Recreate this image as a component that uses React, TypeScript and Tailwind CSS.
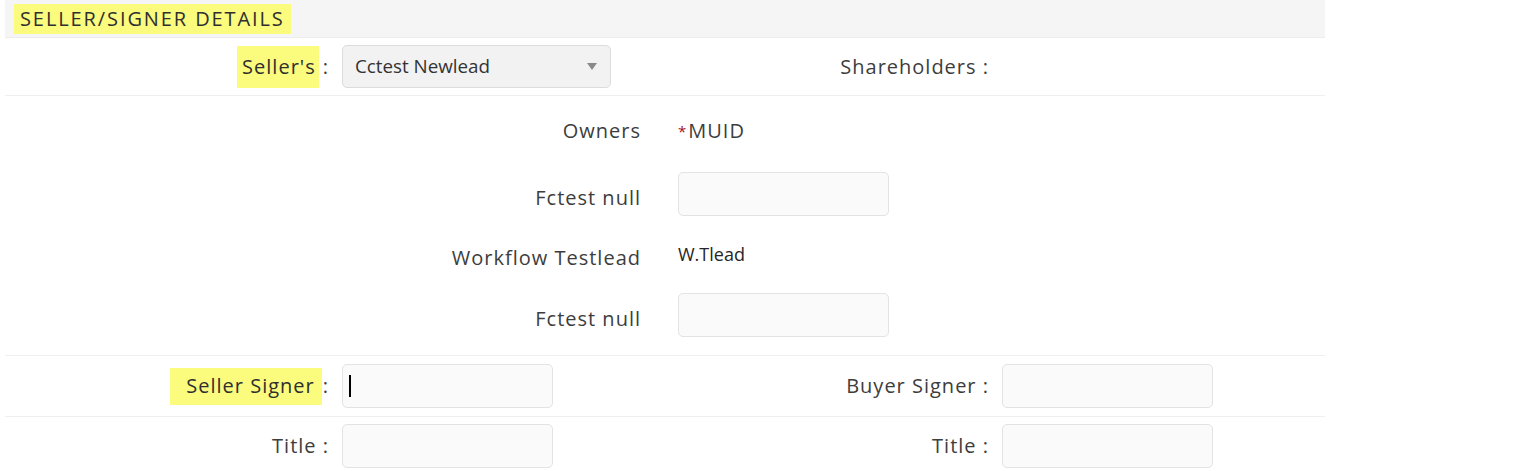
import React from 'react'

const label = "font-['Open_Sans',sans-serif] text-[20px] tracking-[0.05em] text-[#3d3d3d]"

const TextBox = ({ cursor = false }: { cursor?: boolean }) => (
  <div className="w-[211px] h-[44px] rounded-[5px] border border-[#e3e3e3] bg-[#fafafa] flex items-center pl-[6px]">
    {cursor && <span className="block w-[2px] h-[22px] bg-black" />}
  </div>
)

const App = () => {
  return (
    <div className="bg-white min-h-[471px] w-[1522px]">
      <div className="w-[1320px] ml-[5px]">
        {/* header */}
        <div className="h-[38px] bg-[#f5f5f5] border-b border-[#ececec] flex items-center pl-[9px]">
          <span className="font-['Open_Sans',sans-serif] text-[20px] tracking-[0.095em] bg-[#fbfb7e] h-[30px] flex items-center px-[6px] text-[#2f2f2f]">
            SELLER/SIGNER DETAILS
          </span>
        </div>

        {/* seller row */}
        <div className="grid grid-cols-4 h-[58px] items-center border-b border-[#efefef]">
          <div className={`${label} flex justify-end items-center pr-[6px]`}>
            <span className="bg-[#fbfb7e] h-[42px] flex items-center pl-[5px] pr-[3px] text-[#2f2f2f]">Seller's</span>
            <span className="ml-[4px]">:</span>
          </div>
          <div className="pl-[7px]">
            <div className="w-[269px] h-[43px] rounded-[5px] border border-[#dcdcdc] bg-[#f2f2f2] flex items-center justify-between pl-[12px] pr-[13px]">
              <span className="font-['Open_Sans',sans-serif] text-[18.8px] text-[#333]">Cctest Newlead</span>
              <svg width="10" height="7" viewBox="0 0 10 7">
                <path d="M0 0 L10 0 L5 7 Z" fill="#8a8a8a" />
              </svg>
            </div>
          </div>
          <div className={`${label} text-right pr-[6px]`}>Shareholders :</div>
          <div />
        </div>

        {/* owners block */}
        <div className="grid grid-cols-2 border-b border-[#efefef] pb-[17px]">
          <div className={`${label} h-[70px] flex items-center justify-end pr-[24px]`}>Owners</div>
          <div className={`${label} h-[70px] flex items-center pl-[13px]`}>
            <span className="text-[#a0102a] text-[15px] self-start mt-[24px] mr-[1px]">*</span>MUID
          </div>

          <div className={`${label} h-[56px] flex items-center justify-end pr-[24px] pt-[8px]`}>Fctest null</div>
          <div className="h-[56px] flex items-center pl-[13px]"><TextBox /></div>

          <div className={`${label} h-[70px] flex items-center justify-end pr-[24px] pt-[2px]`}>Workflow Testlead</div>
          <div className="h-[70px] flex items-center pl-[13px] pb-[6px] font-['Open_Sans',sans-serif] text-[18px] text-[#262626]">W.Tlead</div>

          <div className={`${label} h-[46px] flex items-center justify-end pr-[24px] pt-[8px]`}>Fctest null</div>
          <div className="h-[46px] flex items-center pl-[13px]"><TextBox /></div>
        </div>

        {/* signer row */}
        <div className="grid grid-cols-4 h-[61px] items-center border-b border-[#efefef]">
          <div className={`${label} flex justify-end items-center pr-[6px]`}>
            <span className="bg-[#fbfb7e] h-[37px] flex items-center pl-[16px] pr-[7px] text-[#2f2f2f]">Seller Signer</span>
            <span className="ml-[1px]">:</span>
          </div>
          <div className="pl-[7px]"><TextBox cursor /></div>
          <div className={`${label} text-right pr-[6px]`}>Buyer Signer :</div>
          <div className="pl-[7px]"><TextBox /></div>
        </div>

        {/* title row */}
        <div className="grid grid-cols-4 h-[55px] items-center">
          <div className={`${label} text-right pr-[6px] pt-[2px]`}>Title :</div>
          <div className="pl-[7px] pt-[2px]"><TextBox /></div>
          <div className={`${label} text-right pr-[6px] pt-[2px]`}>Title :</div>
          <div className="pl-[7px] pt-[2px]"><TextBox /></div>
        </div>
      </div>
    </div>
  )
}

export default App
